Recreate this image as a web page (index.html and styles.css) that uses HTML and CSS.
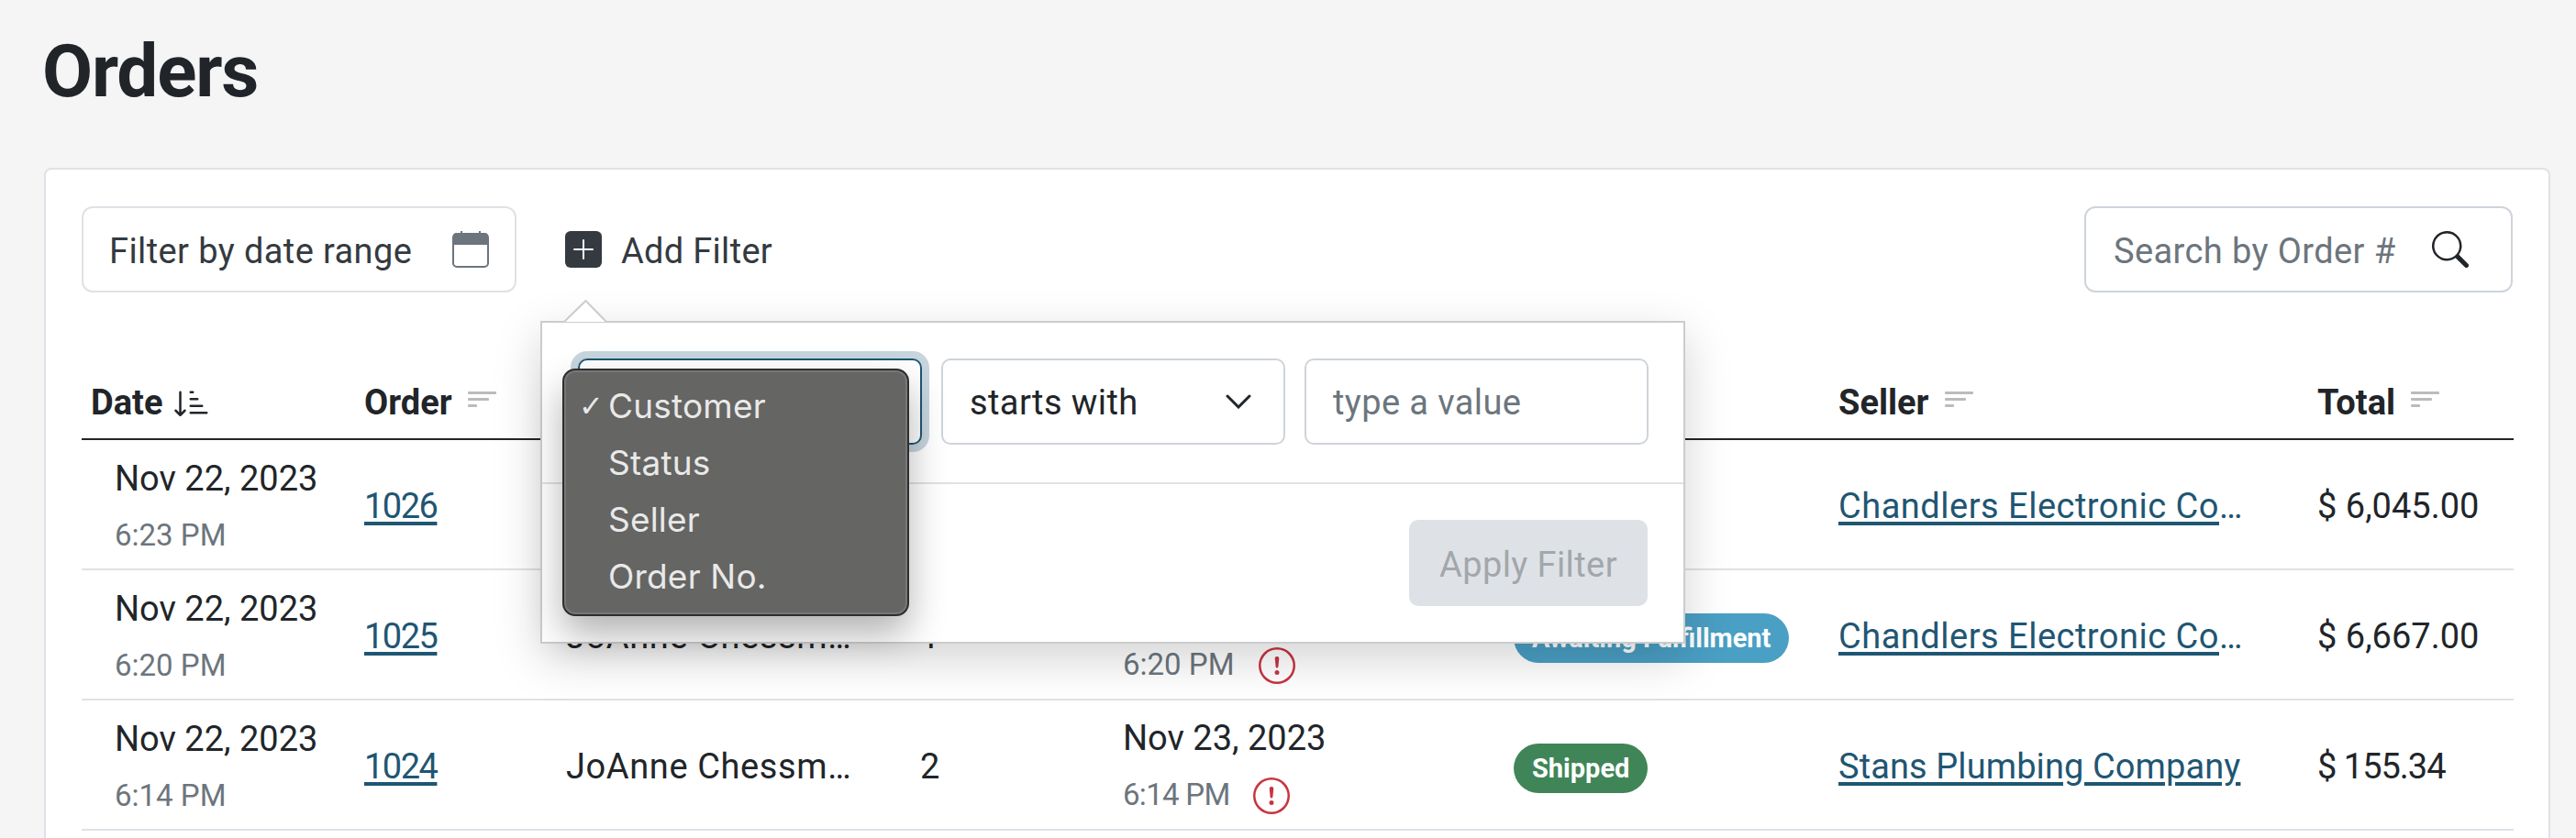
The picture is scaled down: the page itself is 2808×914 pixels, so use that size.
FILE: index.html

```html
<!DOCTYPE html>
<html lang="en">
<head>
    <meta charset="UTF-8">
    <title>Orders</title>
    <link rel="stylesheet" href="styles.css">
</head>
<body>
    <svg class="defs" width="0" height="0">
        <symbol id="bars" viewBox="0 0 31 17"><rect width="31" height="3" rx="1"/><rect y="7" width="23" height="3" rx="1"/><rect y="14" width="10" height="3" rx="1"/></symbol>
        <symbol id="alert" viewBox="0 0 16 16"><path d="M8 15A7 7 0 1 1 8 1a7 7 0 0 1 0 14m0 1A8 8 0 1 0 8 0a8 8 0 0 0 0 16"/><path d="M7.002 11a1 1 0 1 1 2 0 1 1 0 0 1-2 0M7.1 4.995a.905.905 0 1 1 1.8 0l-.35 3.507a.552.552 0 0 1-1.1 0z"/></symbol>
    </svg>
    <div class="page">
        <h1 class="title">Orders</h1>
        <div class="card">
            <div class="toolbar">
                <div class="date-filter">
                    <span class="label">Filter by date range</span>
                    <svg class="calendar" width="40" height="40" viewBox="0 0 40 40"><path d="M9 0h2v4H9zM29 0h2v4h-2z" fill="#6c757d"/><path d="M5 2h30a4 4 0 0 1 4 4v9H1V6a4 4 0 0 1 4-4z" fill="#6c757d"/><rect x="1" y="3" width="38" height="36" rx="4" fill="none" stroke="#6c757d" stroke-width="2"/></svg>
                </div>
                <div class="add-filter">
                    <div class="add-filter-btn">
                        <svg width="40" height="40" viewBox="0 0 40 40"><rect width="40" height="40" rx="6" fill="#343a40"/><path d="M20 10v20M10 20h20" stroke="#fff" stroke-width="2" stroke-linecap="round"/></svg>
                        <span class="label">Add Filter</span>
                    </div>
                    <div class="popover">
                        <svg class="popover-arrow" width="49" height="25" viewBox="0 0 49 25"><path d="M1 24 24.500 1 47 24" fill="#fff" stroke="#ccc" stroke-width="2"/></svg>
                        <div class="popover-fields">
                            <div class="field field-focus"></div>
                            <div class="field">
                                <span class="label">starts with</span>
                                <svg width="28" height="16" viewBox="0 0 28 16"><path d="M2 2l12 12L26 2" fill="none" stroke="#212529" stroke-width="3" stroke-linecap="round"/></svg>
                            </div>
                            <div class="field field-input"><span class="label">type a value</span></div>
                        </div>
                        <div class="popover-foot">
                            <button class="apply">Apply Filter</button>
                        </div>
                        <ul class="menu">
                            <li><span class="check">✓</span>Customer</li>
                            <li><span class="check"></span>Status</li>
                            <li><span class="check"></span>Seller</li>
                            <li><span class="check"></span>Order No.</li>
                        </ul>
                    </div>
                </div>
                <div class="search">
                    <span class="label">Search by Order #</span>
                    <svg width="40" height="40" viewBox="0 0 16 16" fill="#212529"><path d="M11.742 10.344a6.500 6.500 0 1 0-1.397 1.398h-.001q.044.060.098.115l3.850 3.850a1 1 0 0 0 1.415-1.414l-3.850-3.850a1 1 0 0 0-.115-.100zM12 6.500a5.500 5.500 0 1 1-11 0 5.500 5.500 0 0 1 11 0"/></svg>
                </div>
            </div>
            <table class="orders">
                <colgroup>
                    <col class="col-date"><col class="col-order"><col class="col-customer"><col class="col-items">
                    <col class="col-ship"><col class="col-status"><col class="col-seller"><col class="col-total">
                </colgroup>
                <thead>
                    <tr>
                        <th>Date <svg class="sort-active" width="40" height="40" viewBox="0 0 16 16" fill="#212529"><path d="M3.500 3.500a.5.5 0 0 0-1 0v8.793l-1.146-1.147a.5.5 0 0 0-.708.708l2 1.999.007.007a.497.497 0 0 0 .7-.006l2-2a.5.5 0 0 0-.707-.708L3.500 12.293zm4 .5a.5.5 0 0 1 0-1h1a.5.5 0 0 1 0 1zm0 3a.5.5 0 0 1 0-1h3a.5.5 0 0 1 0 1zm0 3a.5.5 0 0 1 0-1h5a.5.5 0 0 1 0 1zM7 12.500a.5.5 0 0 0 .5.5h7a.5.5 0 0 0 0-1h-7a.5.5 0 0 0-.5.5"/></svg></th>
                        <th>Order <svg class="sort"><use href="#bars"/></svg></th>
                        <th>Customer</th>
                        <th>Items</th>
                        <th>Ship By</th>
                        <th>Status</th>
                        <th>Seller <svg class="sort"><use href="#bars"/></svg></th>
                        <th>Total <svg class="sort"><use href="#bars"/></svg></th>
                    </tr>
                </thead>
                <tbody>
                    <tr>
                        <td class="when"><div>Nov 22, 2023</div><div class="time">6:23 PM</div></td>
                        <td><a class="order-no" href="#">1026</a></td>
                        <td class="customer"><div class="clip clip-customer">JoAnne Chessman</div></td>
                        <td>1</td>
                        <td><div>Nov 23, 2023</div><div class="time">6:23 PM <svg class="alert"><use href="#alert"/></svg></div></td>
                        <td><span class="badge badge-success">Shipped</span></td>
                        <td><div class="clip clip-seller"><a href="#">Chandlers Electronic Company</a></div></td>
                        <td>$ 6,045.00</td>
                    </tr>
                    <tr>
                        <td class="when"><div>Nov 22, 2023</div><div class="time">6:20 PM</div></td>
                        <td><a class="order-no" href="#">1025</a></td>
                        <td class="customer"><div class="clip clip-customer">JoAnne Chessman</div></td>
                        <td>1</td>
                        <td><div>Nov 23, 2023</div><div class="time">6:20 PM <svg class="alert"><use href="#alert"/></svg></div></td>
                        <td><span class="badge badge-info">Awaiting Fulfillment</span></td>
                        <td><div class="clip clip-seller"><a href="#">Chandlers Electronic Company</a></div></td>
                        <td>$ 6,667.00</td>
                    </tr>
                    <tr>
                        <td class="when"><div>Nov 22, 2023</div><div class="time">6:14 PM</div></td>
                        <td><a class="order-no" href="#">1024</a></td>
                        <td class="customer"><div class="clip clip-customer">JoAnne Chessman</div></td>
                        <td>2</td>
                        <td><div>Nov 23, 2023</div><div class="time time-tight">6:14 PM <svg class="alert"><use href="#alert"/></svg></div></td>
                        <td><span class="badge badge-success">Shipped</span></td>
                        <td><div class="clip clip-seller clip-tight"><a href="#">Stans Plumbing Company</a></div></td>
                        <td class="total-tight">$ 155.34</td>
                    </tr>
                </tbody>
            </table>
        </div>
    </div>
</body>
</html>
```

FILE: styles.css

```css
html, body {
    margin: 0;
    height: 100%;
    overflow: hidden;
}
body {
    background-color: #f5f5f5;
    color: #212529;
    font-family: Roboto, sans-serif;
    font-size: 38px;
}
.defs {
    position: absolute;
}
.page {
    padding: 0 28px 0 48px;
}
.title {
    margin: 0 0 0 -2px;
    padding: 30px 0 57px;
    font-size: 80px;
    line-height: 96px;
    font-weight: 700;
    letter-spacing: -1.2px;
}
.card {
    background-color: #fff;
    border: 2px solid #dee2e6;
    border-radius: 8px;
    padding: 40px 39px 200px;
}
.toolbar {
    display: flex;
    align-items: center;
    height: 94px;
}
.label {
    padding-top: 3px;
}
.date-filter, .search {
    display: flex;
    align-items: center;
    justify-content: space-between;
    box-sizing: border-box;
    height: 94px;
    background-color: #fff;
    border-radius: 12px;
    letter-spacing: 0.4px;
}
.date-filter {
    width: 474px;
    padding: 0 28px 0 28px;
    border: 2px solid #dee2e6;
    color: #343a40;
}
.search {
    width: 467px;
    margin-left: auto;
    padding: 0 46px 0 30px;
    border: 2px solid #ced4da;
    color: #6c757d;
}
.add-filter {
    position: relative;
    margin-left: 53px;
}
.add-filter-btn {
    display: flex;
    align-items: center;
    gap: 21px;
    color: #343a40;
    letter-spacing: 0.3px;
}
.popover {
    position: absolute;
    z-index: 10;
    top: 101px;
    left: -27px;
    box-sizing: border-box;
    width: 1248px;
    height: 352px;
    background-color: #fff;
    border: 2px solid #ccc;
    box-shadow: 0 16px 48px rgba(0, 0, 0, 0.175);
}
.popover-arrow {
    position: absolute;
    top: -25px;
    left: 23px;
}
.popover-fields {
    display: flex;
    gap: 21px;
    padding: 39px 40px 41px 39px;
    border-bottom: 2px solid #dee2e6;
    letter-spacing: 0.4px;
}
.field {
    display: flex;
    align-items: center;
    justify-content: space-between;
    flex: 0 0 auto;
    box-sizing: border-box;
    width: 375px;
    height: 94px;
    padding: 0 35px 0 29px;
    border: 2px solid #ced4da;
    border-radius: 10px;
}
.field-focus {
    border-color: #1f5673;
    box-shadow: 0 0 0 8px #c7d5dd;
}
.field-input {
    color: #6c757d;
}
.popover-foot {
    display: flex;
    justify-content: flex-end;
    padding: 39px 39px 0 0;
}
.apply {
    width: 260px;
    height: 94px;
    padding: 5px 0 0;
    border: 0;
    border-radius: 10px;
    background-color: #dee2e6;
    color: #a2a7ab;
    font: inherit;
    letter-spacing: 0.4px;
}
.menu {
    position: absolute;
    top: 50px;
    left: 22px;
    box-sizing: border-box;
    width: 378px;
    height: 270px;
    margin: 0;
    padding: 8px 0;
    list-style: none;
    background-color: #656563;
    border: 2px solid #2e2e2e;
    border-radius: 14px;
    box-shadow: inset 0 0 0 2px #777, 0 20px 40px rgba(0, 0, 0, 0.3);
    color: #e9e9e9;
    font-family: Inter, sans-serif;
    font-size: 37px;
    letter-spacing: 0.2px;
}
.menu li {
    display: flex;
    align-items: center;
    height: 62px;
}
.check {
    flex: 0 0 48px;
    padding-left: 16px;
    box-sizing: border-box;
    font-family: "DejaVu Sans", sans-serif;
    font-size: 32px;
}
.orders {
    width: 2651px;
    margin-top: 81px;
    border-collapse: collapse;
    table-layout: fixed;
}
.col-date { width: 298px; }
.col-order { width: 222px; }
.col-customer { width: 384px; }
.col-items { width: 221px; }
.col-ship { width: 426px; }
.col-status { width: 354px; }
.col-seller { width: 522px; }
.col-total { width: 224px; }
.orders th {
    height: 78px;
    padding: 0 0 0 10px;
    border-bottom: 2px solid #212529;
    text-align: left;
    font-weight: 700;
    white-space: nowrap;
}
.orders th svg {
    vertical-align: middle;
}
.sort {
    width: 31px;
    height: 17px;
    margin: -12px 0 0 8px;
    fill: #bbb;
}
.sort-active {
    margin: -6px 0 0 2px;
}
.orders td {
    height: 142px;
    padding: 3px 0 0 10px;
    box-sizing: border-box;
    border-bottom: 2px solid #dee2e6;
    white-space: nowrap;
}
.orders td.when {
    padding-left: 36px;
}
.orders td.customer {
    padding-left: 8px;
}
.time {
    margin-top: 20px;
    color: #6c757d;
    font-size: 33px;
}
.time-tight {
    letter-spacing: -0.7px;
}
.total-tight {
    letter-spacing: -1px;
}
.alert {
    width: 40px;
    height: 40px;
    margin: -2px 0 0 18px;
    vertical-align: middle;
    fill: #c9343f;
}
a {
    color: #1f5673;
    text-decoration-thickness: 4px;
    text-underline-offset: 4px;
}
.order-no {
    letter-spacing: -1.500px;
}
.clip {
    overflow: hidden;
    text-overflow: ellipsis;
}
.clip-customer {
    width: 312px;
    letter-spacing: 0.6px;
}
.clip-seller {
    width: 448px;
    color: #1f5673;
    letter-spacing: 0.5px;
}
.clip-seller.clip-tight {
    letter-spacing: 0.1px;
}
.badge {
    display: inline-block;
    height: 54px;
    margin-top: 4px;
    padding: 0 20px;
    border-radius: 27px;
    color: #fff;
    font-size: 29px;
    font-weight: 700;
    line-height: 54px;
    vertical-align: middle;
}
.badge-info {
    background-color: #4a9fc4;
}
.badge-success {
    background-color: #408558;
}
```
